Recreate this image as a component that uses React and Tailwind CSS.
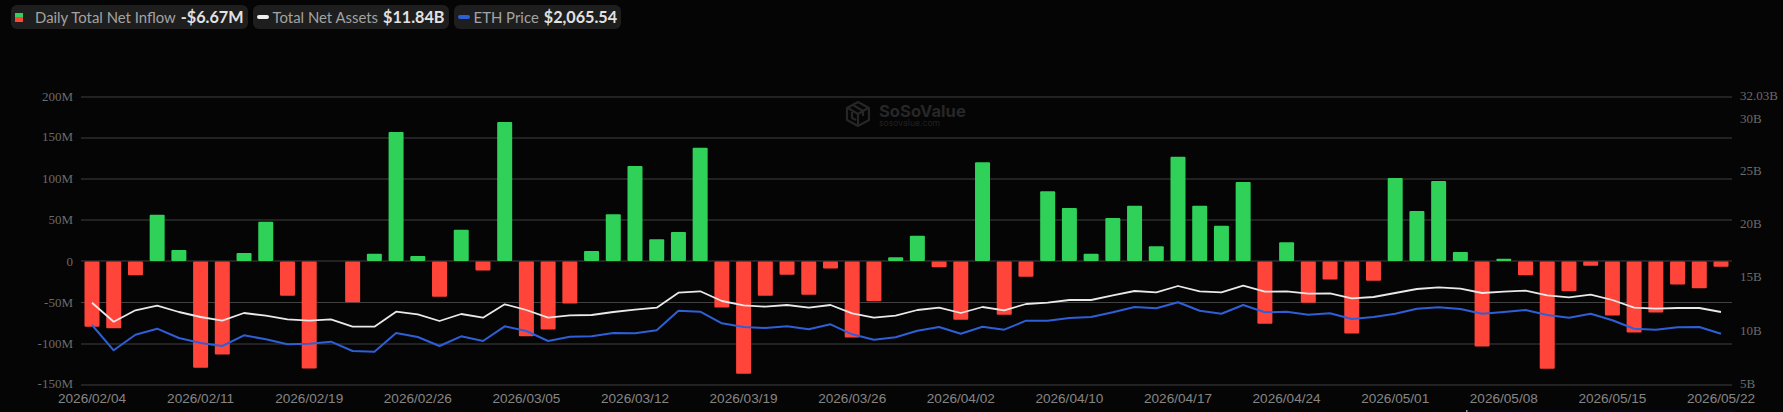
const barOffsets = [
  -65.3, -66.7, -13.7, 46.3, 11, -106.3, -93, 8, 39.3, -34.3,
  -107, 0, -40.7, 7.3, 129, 5, -35.3, 31.3, -9, 139,
  -74.7, -68, -42, 10, 46.7, 95, 21.7, 29, 113.3, -46,
  -112.3, -34.3, -13.3, -33.3, -7, -76, -39.7, 3.7, 25.3, -5.7,
  -58.3, 98.7, -53.3, -15.3, 69.7, 53, 7.3, 43, 55.3, 14.7,
  104.3, 55.3, 35.3, 79, -62.3, 18.7, -41.3, -18, -72, -19.3,
  83, 50, 80, 9, -85, 2.3, -13.7, -107.3, -29.7, -4.3,
  -54, -71, -51, -23, -26.7, -5.3,
];

// line points as read off the reference, 3x crop coords
const assetsLine = [
  638, 695, 661, 647, 666, 681, 692, 669, 677, 688, 692, 688, 710, 710, 665, 673, 693, 672, 683, 643,
  660, 683, 676, 675, 666, 659, 653, 608, 604, 633, 646, 650, 645, 653, 645, 670, 683, 677, 660, 653,
  669, 651, 661, 642, 638, 630, 630, 616, 603, 607, 588, 604, 607, 587, 605, 604, 611, 610, 625, 621,
  609, 597, 592, 596, 609, 605, 602, 616, 622, 614, 630, 653, 656, 654, 654, 666,
];
const priceLine = [
  705, 781, 734, 716, 744, 759, 768, 736, 748, 763, 761, 755, 783, 785, 729, 741, 768, 739, 753, 709,
  723, 753, 740, 739, 729, 730, 721, 662, 665, 700, 711, 714, 709, 718, 703, 733, 749, 742, 722, 711,
  731, 710, 719, 692, 692, 684, 681, 667, 651, 655, 637, 662, 671, 645, 667, 665, 674, 670, 687, 681,
  671, 656, 652, 657, 671, 666, 660, 675, 683, 671, 691, 716, 719, 712, 711, 731,
];

const gridY = [97, 138, 179, 220, 261, 302.5, 344, 385];
const leftLabels = [
  ["200M", 96], ["150M", 136.5], ["100M", 178], ["50M", 219.7], ["0", 261],
  ["-50M", 302.3], ["-100M", 343], ["-150M", 383.7],
];
const rightLabels = [
  ["32.03B", 95.3], ["30B", 118], ["25B", 170.3], ["20B", 223.7],
  ["15B", 276.7], ["10B", 330.7], ["5B", 383.7],
];
const dates = [
  "2026/02/04", "2026/02/11", "2026/02/19", "2026/02/26", "2026/03/05", "2026/03/12", "2026/03/19", "2026/03/26",
  "2026/04/02", "2026/04/10", "2026/04/17", "2026/04/24", "2026/05/01", "2026/05/08", "2026/05/15", "2026/05/22",
];

const barX = (i) => 92 + i * 21.72;
const toPoints = (line) => line.map((z, i) => `${barX(i).toFixed(1)},${(90 + z / 3).toFixed(1)}`).join(" ");

function LegendChip({ marker, label, value }) {
  return (
    <div className="flex h-6 items-center rounded-md bg-[#1e1e1e] pl-1 pr-1 font-['Lato',sans-serif]">
      {marker}
      <span className="text-[14.9px] text-[#a3a3a3]">{label}</span>
      <span className="ml-[5px] text-[16.2px] font-bold text-[#e2e2e2]">{value}</span>
    </div>
  );
}

function Chart() {
  return (
    <svg width="1783" height="383" viewBox="0 29 1783 383" className="block">
      {gridY.map((y) => (
        <line key={y} x1="81" x2="1732" y1={y} y2={y} stroke="#414141" strokeWidth="1" />
      ))}

      {/* watermark */}
      <g fill="none" stroke="#262626" strokeWidth="2.2" strokeLinejoin="round">
        <path d="M858 102l11 6v12l-11 6-11-6v-12z" />
        <path d="M848 108l10 6 10-6M858 114v11M853 105l10 6v5M852 112v6l4 2" />
      </g>
      <text x="879" y="116.5" fontFamily="Inter, sans-serif" fontWeight="700" fontSize="16.6" fill="#272727">SoSoValue</text>
      <text x="879" y="126" fontFamily="Inter, sans-serif" fontSize="8.6" fill="#212121">sosovalue.com</text>

      {barOffsets.map((v, i) =>
        v === 0 ? null : (
          <rect
            key={i}
            x={barX(i) - 7.5}
            y={v > 0 ? 261 - v : 261.5}
            width="15"
            height={Math.abs(v)}
            rx="1"
            fill={v > 0 ? "#30d158" : "#ff453a"}
          />
        )
      )}

      <polyline points={toPoints(assetsLine)} fill="none" stroke="#e9e9e9" strokeWidth="1.8" strokeLinejoin="round" />
      <polyline points={toPoints(priceLine)} fill="none" stroke="#2f5fd6" strokeWidth="2" strokeLinejoin="round" />

      <g fontFamily="'Liberation Serif', serif" fontSize="13" fill="#6b6b6b">
        {leftLabels.map(([t, y]) => (
          <text key={t} x="73" y={y} textAnchor="end" dominantBaseline="central">{t}</text>
        ))}
        {rightLabels.map(([t, y]) => (
          <text key={t} x="1740" y={y} dominantBaseline="central">{t}</text>
        ))}
      </g>
      <g fontFamily="'Liberation Sans', sans-serif" fontSize="13.6" fill="#858585">
        {dates.map((d, i) => (
          <text key={d} x={92 + i * 108.6} y="398" textAnchor="middle" dominantBaseline="central">{d}</text>
        ))}
      </g>

      {/* faint edge of whatever sits below the chart */}
      <line x1="1467" x2="1735" y1="411" y2="411" stroke="#0c1122" strokeWidth="1" />
      <rect x="1466" y="410" width="1.5" height="2" fill="#8a8fa0" />
    </svg>
  );
}

export default function App() {
  return (
    <main className="h-[412px] w-[1783px] overflow-hidden bg-[#050505]">
      <div className="flex h-[29px] gap-[5px] pl-[11px] pt-[5px]">
        <LegendChip
          marker={
            <span className="mr-3 flex h-[9px] w-2 flex-col">
              <span className="h-1/2 bg-[#30d158]" />
              <span className="h-1/2 bg-[#ff453a]" />
            </span>
          }
          label="Daily Total Net Inflow"
          value="-$6.67M"
        />
        <LegendChip
          marker={<span className="mr-1 h-1 w-3 rounded-full bg-[#f0f0f0]" />}
          label="Total Net Assets"
          value="$11.84B"
        />
        <LegendChip
          marker={<span className="mr-1 h-1 w-3 rounded-full bg-[#2f5fd6]" />}
          label="ETH Price"
          value="$2,065.54"
        />
      </div>
      <Chart />
    </main>
  );
}
